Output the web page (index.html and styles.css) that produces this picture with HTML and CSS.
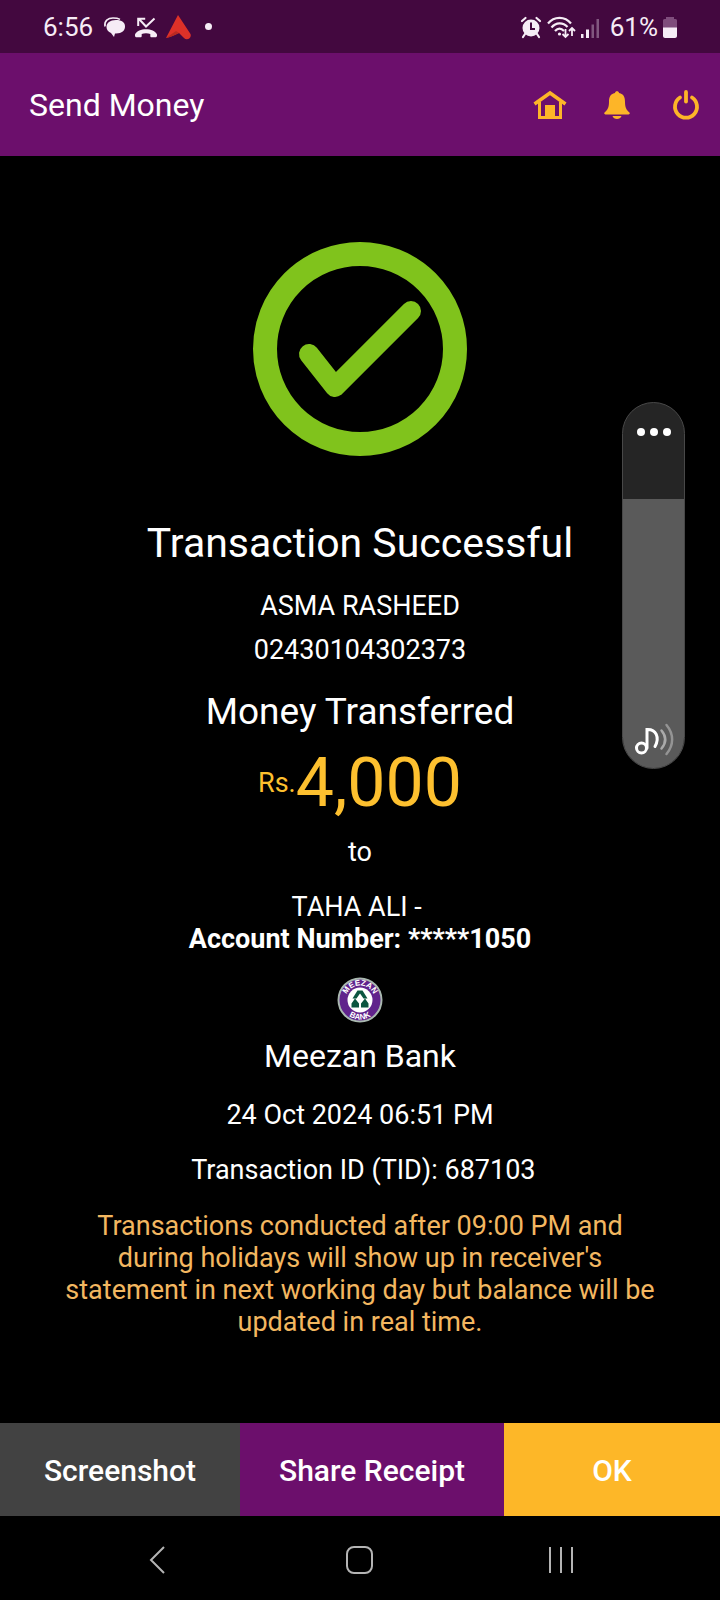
FILE: index.html
```html
<!DOCTYPE html>
<html lang="en">
<head>
<meta charset="utf-8">
<meta name="viewport" content="width=device-width, initial-scale=1">
<title>Send Money</title>
<link rel="stylesheet" href="styles.css">
</head>
<body>
<div class="screen">
  <div class="status">
    <div class="status-side">
      <span class="status-text time">6:56</span>
      <svg width="24" height="24" viewBox="0 0 24 24"><path fill="#f6ecf6" d="M13 5C7 5 3.500 8 3.500 12c0 3 2 5 4.500 6l3 4 1-3.500h1c6 0 9-3 9-7s-3-6.500-9-6.500z"/><path d="M2 11.500C1 6 5 3 10 3c3 0 5 .3 7 1.400" fill="none" stroke="#f6ecf6" stroke-width="1.600"/></svg>
      <svg width="24" height="24" viewBox="0 0 24 24" fill="none" stroke="#f6ecf6"><path d="M20.500 3.500l-8.500 8-7-7.500M4.200 11V3.800h7" stroke-width="2"/><path fill="#f6ecf6" stroke="none" d="M1 19.500C4 12.500 20 12.500 23 19.500c.3 2-.5 2.800-2 2.800h-3.500c-.8 0-1.200-.6-1.200-1.400v-2c-2.500-1-6.100-1-8.600 0v2c0 .8-.4 1.400-1.200 1.400H3c-1.500 0-2.300-.8-2-2.800z"/></svg>
      <svg class="arrow" width="26" height="26" viewBox="0 0 26 26"><path fill="#de3128" d="M13 1L1 24c4-.4 9-3 13-5l5 5c3 3 8-.2 6.500-4z"/><path fill="#b92a22" d="M1 24c5-1 10-3.500 13-5l-3-2z"/></svg>
      <span class="dot"></span>
    </div>
    <div class="status-side right">
      <svg width="22" height="24" viewBox="0 0 22 24"><path stroke="#f6ecf6" stroke-width="2.200" stroke-linecap="round" d="M2 6l3.500-3M20 6l-3.500-3M5 19l-2 3M17 19l2 3"/><circle cx="11" cy="13" r="8.500" fill="#f6ecf6"/><path d="M11 7.500V14h4" fill="none" stroke="#43083f" stroke-width="2"/></svg>
      <svg width="30" height="24" viewBox="0 0 30 24" fill="none" stroke="#f6ecf6" stroke-width="2.200"><path d="M2 8.500C8 1 19 1 25 8.500M5.500 12.500C10 7 17 7 21.500 12M9 16c3-3.300 6-3.300 9 0"/><circle cx="13.500" cy="19" r="1.600" fill="#f6ecf6" stroke="none"/><path d="M19.500 14v8M16.500 19l3 3 3-3M26 21v-8M23 16l3-3 3 3" stroke-width="1.800"/></svg>
      <svg width="20" height="24" viewBox="0 0 20 24" fill="#f6ecf6"><path d="M1 19h2.500v4H1zM6 14.500h3V23H6z"/><path opacity=".35" d="M11.500 9.500H14V23h-2.500zM16.500 4H19v19h-2.500z"/></svg>
      <span class="status-text percent">61%</span>
      <svg width="16" height="24" viewBox="0 0 16 24"><path fill="#7f4d7c" d="M4 2h8v2h1.500c1 0 1.500.8 1.500 1.800V13H1V5.800C1 4.800 1.500 4 2.500 4H4z"/><path fill="#f6ecf6" d="M1 12.500h14V21c0 1-1 2-2 2H3c-1 0-2-1-2-2z"/></svg>
    </div>
  </div>

  <header class="appbar">
    <h1 class="appbar-title">Send Money</h1>
    <div class="appbar-actions">
      <button class="icon-button" aria-label="Home"><svg width="36" height="32" viewBox="0 0 36 32"><path d="M2.500 15L18 4l15.500 11" fill="none" stroke="#fdb528" stroke-width="3.500"/><path d="M7.500 13v15.500h21V13" fill="none" stroke="#fdb528" stroke-width="3"/><path fill="#fdb528" d="M13 16h10v13H13z"/></svg></button>
      <button class="icon-button" aria-label="Notifications"><svg width="28" height="32" viewBox="0 0 28 32" fill="#fdb528"><path d="M12 4c0-2.500 4-2.500 4 0 5 1 6 4.500 6 9 0 6 2 8.500 4.500 10.500 1 1.500-.5 2-2 2H3.500c-1.500 0-3-.5-2-2C4 21.500 6 19 6 13c0-4.500 1-8 6-9zM9.500 27h9c-1 4-8 4-9 0z"/></svg></button>
      <button class="icon-button" aria-label="Log out"><svg width="34" height="32" viewBox="-6 0 34 32" fill="none" stroke="#fdb528" stroke-width="3.800" stroke-linecap="round"><path d="M14 3v9.500"/><path d="M8 8.500a11 11 0 1 0 12 0"/></svg></button>
    </div>
  </header>

  <main class="receipt">
    <svg class="tick" width="214" height="214" viewBox="0 0 214 214" fill="none" stroke="#80c31c"><circle cx="107" cy="107" r="95" stroke-width="24"/><path d="M56 112l26 33 76-76" stroke-width="20" stroke-linecap="round" stroke-linejoin="round"/></svg>
    <h2 class="title">Transaction Successful</h2>
    <p class="sender">ASMA RASHEED</p>
    <p class="sender-account">02430104302373</p>
    <h3 class="subtitle">Money Transferred</h3>
    <p class="amount"><span class="currency">Rs.</span><span class="value">4,000</span></p>
    <p class="to">to</p>
    <p class="receiver">TAHA ALI -&nbsp;<br><strong>Account Number: *****1050</strong></p>
    <svg class="bank-logo" width="46" height="46" viewBox="0 0 46 46" role="img" aria-label="Meezan Bank">
      <defs><path id="arc-top" d="M8.500 23a14.500 14.500 0 0 1 29 0"/><path id="arc-bottom" d="M3.500 23a19.500 19.500 0 0 0 39 0"/></defs>
      <circle cx="23" cy="23" r="21.500" fill="#60238c" stroke="#a9b8b0" stroke-width="2"/>
      <circle cx="23" cy="23" r="12.500" fill="#fff"/>
      <path fill="#0b5540" d="M20.500 13.500h5l5 8h-4l-3.500-5-3.500 5h-4zM18 21.500l4 5v4h-7.500v-4zM28 21.500l3.500 5v4H24v-4z"/>
      <text class="logo-text"><textPath href="#arc-top" startOffset="50%">MEEZAN</textPath></text>
      <text class="logo-text"><textPath href="#arc-bottom" startOffset="50%">BANK</textPath></text>
    </svg>
    <p class="bank">Meezan Bank</p>
    <p class="date">24 Oct 2024 06:51 PM</p>
    <p class="tid">&nbsp;Transaction ID (TID): 687103</p>
    <p class="note">Transactions conducted after 09:00 PM and during holidays will show up in receiver's statement in next working day but balance will be updated in real time.</p>
  </main>

  <div class="actions">
    <button class="action screenshot">Screenshot</button>
    <button class="action share">Share Receipt</button>
    <button class="action ok">OK</button>
  </div>

  <nav class="navbar">
    <button class="nav-button" aria-label="Back"><svg width="28" height="32" viewBox="0 0 28 32"><path d="M19 3L6 16l13 13"/></svg></button>
    <button class="nav-button" aria-label="Home screen"><svg width="28" height="32" viewBox="0 0 28 32"><rect x="1" y="3" width="25" height="26" rx="7"/></svg></button>
    <button class="nav-button" aria-label="Recent apps"><svg width="28" height="32" viewBox="0 0 28 32"><path d="M3 3v26M14 3v26M25 3v26"/></svg></button>
  </nav>

  <div class="volume">
    <button class="volume-more" aria-label="More volume settings"><span></span><span></span><span></span></button>
    <div class="volume-level">
      <input class="volume-range" type="range" min="0" max="100" value="74" aria-label="Media volume">
      <svg width="40" height="36" viewBox="0 0 40 36" fill="none" stroke="#fff" stroke-width="3" stroke-linecap="round"><circle cx="7.500" cy="27" r="5"/><path d="M13 27V8.500c9-.5 13 8 8 17"/><path d="M27.500 9.500c5 6 5 12 0 18" stroke="#aaa" stroke-width="2.500"/><path d="M32.500 4c7.500 9 7.500 20 0 29" stroke="#949494" stroke-width="2.500"/></svg>
    </div>
  </div>
</div>
</body>
</html>
```
FILE: styles.css
```css
* { box-sizing: border-box; }

body {
  margin: 0;
  background: #000;
  color: #fff;
  font-family: Roboto, "Liberation Sans", sans-serif;
  font-size: 27px;
  line-height: 32px;
}

h1, h2, h3, p { margin: 0; font-weight: 400; }

button {
  border: 0;
  padding: 0;
  background: none;
  color: inherit;
  font: inherit;
}

svg { display: block; flex: none; }

.screen {
  position: relative;
  display: flex;
  flex-direction: column;
  min-height: 100vh;
}

.status {
  display: flex;
  justify-content: space-between;
  align-items: center;
  height: 53px;
  padding: 0 42px 0 43px;
  background: #43083f;
  color: #f6ecf6;
}

.status-text { font-size: 26px; }
.status-side { display: flex; align-items: center; gap: 7px; }
.status-side.right { gap: 4px; }
.time { margin-right: 3px; }
.percent { margin-left: 6px; }

.dot {
  width: 7px;
  height: 7px;
  margin-left: 7px;
  border-radius: 50%;
  background: #f6ecf6;
}

.appbar {
  display: flex;
  justify-content: space-between;
  align-items: center;
  height: 103px;
  padding: 0 20px 0 29px;
  background: #6c0f6c;
}

.appbar-title { font-size: 32px; line-height: 38px; }
.appbar-actions { display: flex; align-items: center; gap: 35px; }

.receipt {
  display: flex;
  flex: 1;
  flex-direction: column;
  align-items: center;
  padding: 86px 60px 0;
  text-align: center;
}

.title { margin-top: 62px; font-size: 41px; line-height: 50px; }
.sender { margin-top: 22px; }
.sender-account { margin-top: 12px; }
.subtitle { margin-top: 24px; font-size: 37px; line-height: 44px; }

.amount {
  display: flex;
  align-items: center;
  margin-top: 9px;
  color: #fdc02f;
}

.value { font-size: 68px; line-height: 80px; }
.to { margin-top: 13px; }
.receiver { margin-top: 23px; }
.receiver strong { font-weight: 700; }
.bank-logo { margin-top: 22px; }

.logo-text {
  fill: #fff;
  font-family: "Liberation Sans", sans-serif;
  font-size: 8px;
  font-weight: 700;
  text-anchor: middle;
}

.bank { margin-top: 14px; font-size: 32px; line-height: 38px; }
.date { margin-top: 24px; }
.tid { margin-top: 23px; }
.note { margin-top: 24px; color: #f3b760; }

.actions { display: flex; height: 93px; }
.action { padding-top: 2px; font-size: 30px; font-weight: 500; }
.screenshot { flex: 10; background: #424242; }
.share { flex: 11; background: #6c0f6c; }
.ok { flex: 9; background: #fdb728; }

.navbar {
  display: flex;
  justify-content: center;
  align-items: center;
  gap: 173px;
  height: 84px;
  padding-top: 4px;
}

.nav-button svg {
  fill: none;
  stroke: #b4b4b4;
  stroke-width: 2;
}

.volume {
  position: absolute;
  top: 402px;
  right: 35px;
  display: flex;
  flex-direction: column;
  width: 63px;
  height: 367px;
  overflow: hidden;
  border: 1px solid #484848;
  border-radius: 32px;
  background: #252525;
}

.volume-more {
  display: flex;
  justify-content: center;
  gap: 5px;
  height: 96px;
  padding-top: 25px;
}

.volume-more span {
  width: 8px;
  height: 8px;
  border-radius: 50%;
  background: #fff;
}

.volume-level {
  position: relative;
  display: flex;
  flex: 1;
  flex-direction: column;
  align-items: center;
  justify-content: flex-end;
  padding-bottom: 11px;
  background: #5a5a5a;
}

.volume-range {
  position: absolute;
  inset: 0;
  width: 100%;
  height: 100%;
  margin: 0;
  opacity: 0;
  writing-mode: vertical-lr;
  direction: rtl;
}
```
